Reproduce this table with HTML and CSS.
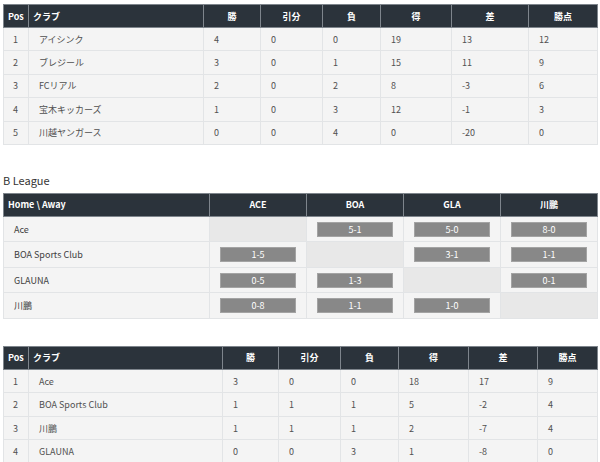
FILE: index.html
```html
<!DOCTYPE html>
<html lang="ja">
<head>
<meta charset="utf-8">
<link rel="stylesheet" href="styles.css">
</head>
<body>
<div class="page">
  <table class="standings t1">
    <colgroup>
      <col style="width:25px"><col style="width:175px"><col style="width:57px"><col style="width:62px"><col style="width:58px"><col style="width:71px"><col style="width:77px"><col style="width:69px">
    </colgroup>
    <thead>
      <tr><th class="l">Pos</th><th class="l">クラブ</th><th>勝</th><th>引分</th><th>負</th><th>得</th><th>差</th><th>勝点</th></tr>
    </thead>
    <tbody>
      <tr><td>1</td><td>アイシンク</td><td>4</td><td>0</td><td>0</td><td>19</td><td>13</td><td>12</td></tr>
      <tr><td>2</td><td>ブレジール</td><td>3</td><td>0</td><td>1</td><td>15</td><td>11</td><td>9</td></tr>
      <tr><td>3</td><td>FCリアル</td><td>2</td><td>0</td><td>2</td><td>8</td><td>-3</td><td>6</td></tr>
      <tr><td>4</td><td>宝木キッカーズ</td><td>1</td><td>0</td><td>3</td><td>12</td><td>-1</td><td>3</td></tr>
      <tr><td>5</td><td>川越ヤンガース</td><td>0</td><td>0</td><td>4</td><td>0</td><td>-20</td><td>0</td></tr>
    </tbody>
  </table>

  <h3 class="league">B League</h3>

  <table class="matrix">
    <colgroup>
      <col style="width:206px"><col style="width:97px"><col style="width:97px"><col style="width:97px"><col style="width:97px">
    </colgroup>
    <thead>
      <tr><th class="l">Home \ Away</th><th>ACE</th><th>BOA</th><th>GLA</th><th>川鵬</th></tr>
    </thead>
    <tbody>
      <tr><td class="team">Ace</td><td class="self"></td><td><span class="score">5-1</span></td><td><span class="score">5-0</span></td><td><span class="score">8-0</span></td></tr>
      <tr><td class="team">BOA Sports Club</td><td><span class="score">1-5</span></td><td class="self"></td><td><span class="score">3-1</span></td><td><span class="score">1-1</span></td></tr>
      <tr><td class="team">GLAUNA</td><td><span class="score">0-5</span></td><td><span class="score">1-3</span></td><td class="self"></td><td><span class="score">0-1</span></td></tr>
      <tr><td class="team">川鵬</td><td><span class="score">0-8</span></td><td><span class="score">1-1</span></td><td><span class="score">1-0</span></td><td class="self"></td></tr>
    </tbody>
  </table>

  <table class="standings t3">
    <colgroup>
      <col style="width:25px"><col style="width:194px"><col style="width:56px"><col style="width:62px"><col style="width:58px"><col style="width:70px"><col style="width:69px"><col style="width:60px">
    </colgroup>
    <thead>
      <tr><th class="l">Pos</th><th class="l">クラブ</th><th>勝</th><th>引分</th><th>負</th><th>得</th><th>差</th><th>勝点</th></tr>
    </thead>
    <tbody>
      <tr><td>1</td><td>Ace</td><td>3</td><td>0</td><td>0</td><td>18</td><td>17</td><td>9</td></tr>
      <tr><td>2</td><td>BOA Sports Club</td><td>1</td><td>1</td><td>1</td><td>5</td><td>-2</td><td>4</td></tr>
      <tr><td>3</td><td>川鵬</td><td>1</td><td>1</td><td>1</td><td>2</td><td>-7</td><td>4</td></tr>
      <tr><td>4</td><td>GLAUNA</td><td>0</td><td>0</td><td>3</td><td>1</td><td>-8</td><td>0</td></tr>
    </tbody>
  </table>
</div>
</body>
</html>
```

FILE: styles.css
```css
html, body {
  margin: 0;
  padding: 0;
  background: #ffffff;
}
body {
  font-family: "Noto Sans CJK JP", "Noto Sans", sans-serif;
  font-size: 9px;
  color: #505050;
}
.page {
  padding: 4px 3px 0 3px;
}
table {
  width: 594px;
  table-layout: fixed;
  border-collapse: collapse;
}
th {
  background: #2b333b;
  color: #ffffff;
  font-weight: bold;
  font-size: 9px;
  height: 22px;
  padding: 0;
  text-align: center;
  border: 1px solid #7e858c;
  line-height: 1;
}
th.l {
  text-align: left;
  padding-left: 4px;
}
td {
  background: #f4f4f4;
  border: 1px solid #e2e4e6;
  padding: 0 0 0 10px;
  line-height: 1;
  white-space: nowrap;
}
.t1 td {
  height: 22.4px;
}
.t3 td {
  height: 22.5px;
}
.standings td:first-child {
  padding-left: 9px;
}
.league {
  margin: 29px 0 6px 0;
  font-size: 11px;
  font-weight: normal;
  color: #333333;
  line-height: 13px;
}
.matrix td {
  height: 24.5px;
  padding: 0 10px;
}
.matrix td.team {
  padding-left: 10px;
  color: #404040;
}
.matrix td.self {
  background: #e8e8e8;
}
.score {
  display: block;
  background: #888888;
  border: 1px solid #a3a3a3;
  color: #ffffff;
  text-align: center;
  height: 13px;
  line-height: 13px;
}
.t3 {
  margin-top: 27px;
}
```
